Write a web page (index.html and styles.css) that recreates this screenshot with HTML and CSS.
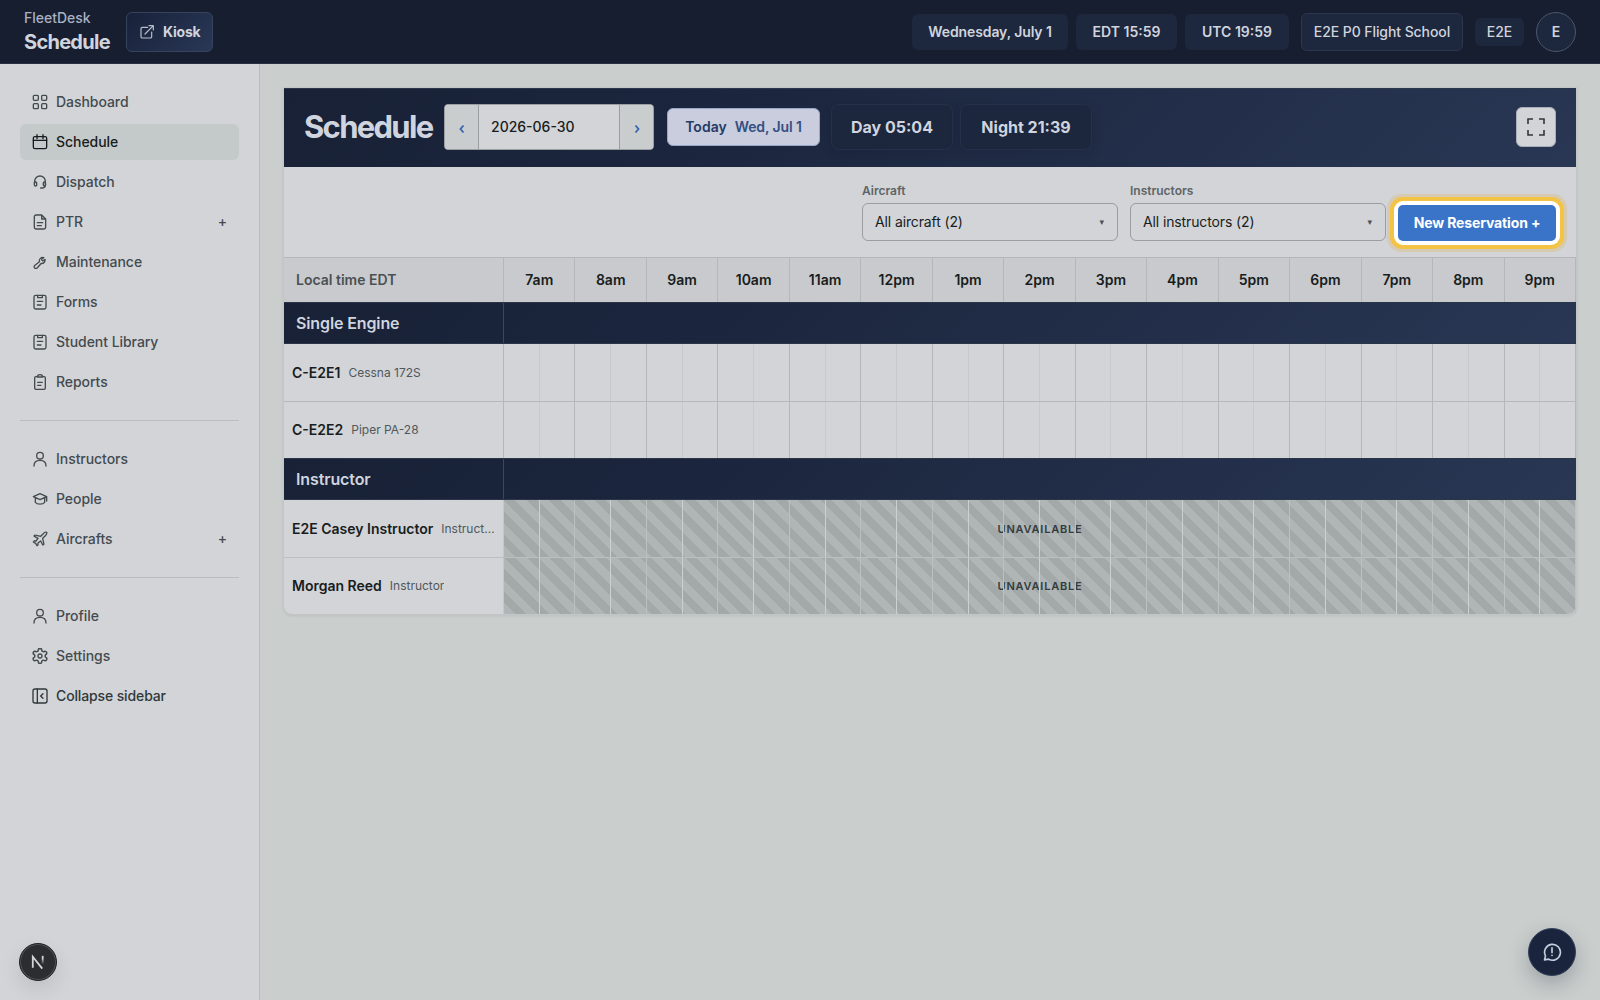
FILE: index.html
```html
<!DOCTYPE html>
<html lang="en">
<head>
<meta charset="utf-8">
<title>FleetDesk – Schedule</title>
<link rel="stylesheet" href="styles.css">
</head>
<body>
<header class="topbar">
  <div class="brand"><span class="brand-name">FleetDesk</span><span class="brand-page">Schedule</span></div>
  <a class="kiosk"><svg class="icon" viewBox="0 0 24 24"><path d="M13 5H5a2 2 0 0 0-2 2v12a2 2 0 0 0 2 2h12a2 2 0 0 0 2-2v-7M9 15 21.500 2.500M15 2.500h6.500V9"/></svg>Kiosk</a>
  <div class="status">
    <span class="chip chip-date">Wednesday, July 1</span>
    <span class="chip chip-local">EDT 15:59</span>
    <span class="chip chip-utc">UTC 19:59</span>
    <span class="chip chip-school">E2E P0 Flight School</span>
    <span class="chip chip-user">E2E</span>
    <span class="avatar">E</span>
  </div>
</header>
<div class="body">
  <aside class="sidebar">
    <nav class="group">
      <a class="item"><svg class="icon" viewBox="0 0 24 24"><rect x="2" y="2" width="7.500" height="7.500" rx="1.500"/><rect x="14.500" y="2" width="7.500" height="7.500" rx="1.500"/><rect x="2" y="14.500" width="7.500" height="7.500" rx="1.500"/><rect x="14.500" y="14.500" width="7.500" height="7.500" rx="1.500"/></svg>Dashboard</a>
      <a class="item active"><svg class="icon" viewBox="0 0 24 24"><rect x="2" y="4" width="20" height="18" rx="2.500"/><path d="M2 9.500h20M7.500 1v6M16.500 1v6"/></svg>Schedule</a>
      <a class="item"><svg class="icon" viewBox="0 0 24 24"><path d="M4 14v-3a8 8 0 0 1 16 0v5c0 3-2 5-5 5h-2"/><path d="M4 12h1.500a1.500 1.500 0 0 1 1.500 1.500v3A1.500 1.500 0 0 1 5.500 18 2 2 0 0 1 3.500 16v-3.500zM20 12h-1.500a1.500 1.500 0 0 0-1.500 1.500v3a1.500 1.500 0 0 0 1.500 1.500 2 2 0 0 0 2-2z"/></svg>Dispatch</a>
      <a class="item"><svg class="icon" viewBox="0 0 24 24"><path d="M14.500 1.500H6a2.500 2.500 0 0 0-2.500 2.500v16A2.500 2.500 0 0 0 6 22.500h12a2.500 2.500 0 0 0 2.500-2.500V7.500zM14.500 1.500v6h6M8 13h8M8 17.500h6"/></svg>PTR<span class="plus">+</span></a>
      <a class="item"><svg class="icon" viewBox="0 0 24 24"><path d="M19.500 8.200 16.800 10a1.200 1.200 0 0 1-1.600-.4l-.5-.8a1.200 1.200 0 0 1 .4-1.600l2.600-1.700a5 5 0 0 0-6.500 6.200L4 17.200a2.600 2.600 0 0 0 3.700 3.700l6-6.700a5 5 0 0 0 5.800-6z"/></svg>Maintenance</a>
      <a class="item"><svg class="icon" viewBox="0 0 24 24"><rect x="3" y="2" width="18" height="20.500" rx="2.500"/><path d="M8.500 2v3.500h7V2M8 11h8M8 16.500h5.500"/></svg>Forms</a>
      <a class="item"><svg class="icon" viewBox="0 0 24 24"><rect x="3" y="2" width="18" height="20.500" rx="2.500"/><path d="M8.500 2v3.500h7V2M8 11h8M8 16.500h5.500"/></svg>Student Library</a>
      <a class="item"><svg class="icon" viewBox="0 0 24 24"><path d="M8 4H6a2 2 0 0 0-2 2v15a2 2 0 0 0 2 2h12a2 2 0 0 0 2-2V6a2 2 0 0 0-2-2h-2M8 4.500a4 3.500 0 0 1 8 0zM8.500 12.500h7M8.500 17h5"/></svg>Reports</a>
    </nav>
    <nav class="group">
      <a class="item"><svg class="icon" viewBox="0 0 24 24"><circle cx="12" cy="7" r="5"/><path d="M3 22.500c0-5.500 4-8.500 9-8.500s9 3 9 8.500"/></svg>Instructors</a>
      <a class="item"><svg class="icon" viewBox="0 0 24 24"><path d="M2 8.500 12 4l10 4.500L12 13zM5 10.500V17c3 3.500 11 3.500 14 0v-6.500M22 8.500V15"/></svg>People</a>
      <a class="item"><svg class="icon" viewBox="0 0 24 24"><path d="M17.800 19.200 16 11l4-4c1.800-1.800 2.500-4 2-5-1-.5-3.500 0-5 2l-4 4-8-1.800c-.7-.2-1.300.1-1.600.6-.3.500-.2 1 .3 1.300L9 11l-3 4H3l-1 1.500 3.500 2L7.500 22 9 21v-3l4-3 2.800 5.300c.3.500.8.600 1.300.4.500-.3.800-.9.700-1.500z"/></svg>Aircrafts<span class="plus">+</span></a>
    </nav>
    <nav class="group">
      <a class="item"><svg class="icon" viewBox="0 0 24 24"><circle cx="12" cy="7" r="5"/><path d="M3 22.500c0-5.500 4-8.500 9-8.500s9 3 9 8.500"/></svg>Profile</a>
      <a class="item"><svg class="icon" viewBox="0 0 24 24"><path d="M9.700 4.100a2.300 2.300 0 0 1 4.600 0 2.300 2.300 0 0 0 3.300 1.900 2.300 2.300 0 0 1 2.300 4 2.300 2.300 0 0 0 0 3.900 2.300 2.300 0 0 1-2.300 4 2.300 2.300 0 0 0-3.300 1.900 2.300 2.300 0 0 1-4.600 0 2.300 2.300 0 0 0-3.300-1.900 2.300 2.300 0 0 1-2.300-4 2.300 2.300 0 0 0 0-3.900 2.300 2.300 0 0 1 2.300-4 2.300 2.300 0 0 0 3.300-1.900" transform="matrix(1.12 0 0 1.12 -1.440 -1.440)"/><circle cx="12" cy="12" r="3"/></svg>Settings</a>
      <a class="item strong"><svg class="icon" viewBox="0 0 24 24"><rect x="1.500" y="1.500" width="21" height="21" rx="3"/><path d="M8 1.500v21M16.500 8.500 13 12l3.500 3.500"/></svg>Collapse sidebar</a>
    </nav>
  </aside>
  <main class="main">
    <section class="card">
      <div class="card-head">
        <h1>Schedule</h1>
        <div class="datebox">
          <span class="step"><svg viewBox="0 0 8 10"><path d="M5.500 1.500 2.500 5l3 3.500"/></svg></span><span class="date">2026-06-30</span><span class="step"><svg viewBox="0 0 8 10"><path d="M2.500 1.500 5.500 5l-3 3.500"/></svg></span>
        </div>
        <span class="today"><b>Today</b> <span>Wed, Jul 1</span></span>
        <span class="clock">Day 05:04</span>
        <span class="clock clock-night">Night 21:39</span>
        <span class="expand"><svg viewBox="0 0 18 18"><path d="M1 6V1h5M12 1h5v5M17 12v5h-5M6 17H1v-5"/></svg></span>
      </div>
      <div class="toolbar">
        <div class="field"><label>Aircraft</label><span class="select">All aircraft (2)<i>▾</i></span></div>
        <div class="field"><label>Instructors</label><span class="select">All instructors (2)<i>▾</i></span></div>
        <span class="new">New Reservation +</span>
      </div>
      <div class="row hours"><div class="label">Local time EDT</div><div class="track"><span>7am</span><span>8am</span><span>9am</span><span>10am</span><span>11am</span><span>12pm</span><span>1pm</span><span>2pm</span><span>3pm</span><span>4pm</span><span>5pm</span><span>6pm</span><span>7pm</span><span>8pm</span><span>9pm</span></div></div>
      <div class="row band"><div class="label">Single Engine</div></div>
      <div class="row slot"><div class="label"><b>C-E2E1</b><small>Cessna 172S</small></div><div class="track"><i></i><i></i><i></i><i></i><i></i><i></i><i></i><i></i><i></i><i></i><i></i><i></i><i></i><i></i><i></i></div></div>
      <div class="row slot last"><div class="label"><b>C-E2E2</b><small>Piper PA-28</small></div><div class="track"><i></i><i></i><i></i><i></i><i></i><i></i><i></i><i></i><i></i><i></i><i></i><i></i><i></i><i></i><i></i></div></div>
      <div class="row band"><div class="label">Instructor</div></div>
      <div class="row slot off"><div class="label"><b>E2E Casey Instructor</b><small>Instructor</small></div><div class="track"><em class="unavailable">UNAVAILABLE</em><i></i><i></i><i></i><i></i><i></i><i></i><i></i><i></i><i></i><i></i><i></i><i></i><i></i><i></i><i></i></div></div>
      <div class="row slot off last"><div class="label"><b>Morgan Reed</b><small>Instructor</small></div><div class="track"><em class="unavailable">UNAVAILABLE</em><i></i><i></i><i></i><i></i><i></i><i></i><i></i><i></i><i></i><i></i><i></i><i></i><i></i><i></i><i></i></div></div>
    </section>
  </main>
</div>
<div class="dev-badge"><svg viewBox="0 0 38 38"><defs><linearGradient id="fade" x1="0" y1="0" x2="0" y2="1"><stop offset="0.3" stop-color="#d3d4d8"/><stop offset="1" stop-color="#d3d4d8" stop-opacity="0"/></linearGradient></defs><path d="M13.500 25V13.500L23.500 26" fill="none" stroke="#d3d4d8" stroke-width="1.900"/><rect x="23" y="12.500" width="1.900" height="9" fill="url(#fade)"/></svg></div>
<div class="feedback"><svg class="icon" viewBox="0 0 24 24"><path d="M3 21.500 4.200 16.700A9.500 9.500 0 1 1 8 20.600zM12 7v5.500M12 16v.2"/></svg></div>
</body>
</html>
```
FILE: styles.css
```css
* { box-sizing: border-box; }
body {
  margin: 0;
  height: 1000px;
  overflow: hidden;
  display: flex;
  flex-direction: column;
  background: #cacecd;
  color: #181d20;
  font-family: Inter, "Liberation Sans", sans-serif;
  font-size: 14px;
  line-height: 20px;
}
.icon {
  width: 16px;
  height: 16px;
  fill: none;
  stroke: currentColor;
  stroke-width: 2;
  stroke-linecap: round;
  stroke-linejoin: round;
  flex: none;
}

/* top bar */
.topbar {
  height: 64px;
  flex: none;
  display: flex;
  align-items: center;
  padding: 0 24px;
  background: #161e30;
  border-bottom: 1px solid #273145;
  color: #d0d4dd;
}
.brand { display: flex; flex-direction: column; width: 86px; margin-right: 16px; }
.brand-name { font-size: 14px; line-height: 20px; font-weight: 500; color: #a9b1c3; }
.brand-page { font-size: 20px; line-height: 28px; font-weight: 700; letter-spacing: -0.72px; }
.kiosk {
  height: 40px;
  width: 87px;
  display: flex;
  align-items: center;
  gap: 8px;
  padding: 0 12px;
  font-weight: 700;
  letter-spacing: -0.2px;
  border: 1px solid #36435c;
  border-radius: 6px;
  background: linear-gradient(135deg, #18213a, #293856);
}
.kiosk .icon { color: #b7bdca; stroke-width: 1.8; }
.status { margin-left: auto; display: flex; align-items: center; }
.chip {
  height: 36px;
  display: flex;
  align-items: center;
  justify-content: center;
  margin-left: 8px;
  font-weight: 600;
  border-radius: 6px;
  background: #1d273d;
  white-space: nowrap;
}
.chip-date { width: 156px; letter-spacing: -0.1px; }
.chip-local { width: 101px; }
.chip-utc { width: 104px; }
.chip-school { width: 162px; height: 38px; margin-left: 12px; border: 1px solid #2c374e; font-weight: 500; letter-spacing: -0.08px; }
.chip-user { width: 49px; height: 28px; margin-left: 12px; font-weight: 500; }
.avatar {
  width: 40px;
  height: 40px;
  margin-left: 12px;
  display: grid;
  place-items: center;
  border: 1px solid #4b566b;
  border-radius: 50%;
  background: #1d273d;
  font-weight: 600;
}

/* sidebar */
.body { flex: 1; display: flex; min-height: 0; }
.sidebar {
  width: 260px;
  flex: none;
  padding: 20px;
  border-right: 1px solid #b7bcbd;
  background: #d3d4d8;
}
.group { display: flex; flex-direction: column; gap: 4px; }
.group + .group { margin-top: 20px; padding-top: 20px; border-top: 1px solid #b9bdbf; }
.item {
  height: 36px;
  display: flex;
  align-items: center;
  gap: 8px;
  padding: 0 12px;
  border-radius: 6px;
  font-weight: 500;
  letter-spacing: -0.05px;
  color: #434b4e;
}
.item.active { background: #c4caca; color: #181d20; }
.item.strong { color: #30383a; letter-spacing: -0.13px; }
.plus { margin-left: auto; }

/* schedule card */
.main { flex: 1; padding: 24px; min-width: 0; }
.card {
  border-radius: 0 0 8px 8px;
  background: #d3d4d8;
  box-shadow: 0 0 0 1px #c2c6c7, 0 1px 3px 1px rgba(0, 0, 0, .08);
}
.card-head {
  height: 79px;
  display: flex;
  align-items: center;
  padding: 0 20px 2px;
  color: #d0d4df;
  border-top: 1px solid #2d374b;
  background: linear-gradient(135deg, #182135, #1b253d 32%, #293754);
}
h1 { margin: 0 12px 0 0; width: 128px; font-size: 31px; line-height: 40px; font-weight: 700; letter-spacing: -1.7px; }
.datebox {
  width: 210px;
  height: 46px;
  display: flex;
  border: 1px solid #999ea1;
  border-radius: 4px;
  overflow: hidden;
  background: #d3d4d8;
  color: #181d20;
}
.step { width: 33px; flex: none; display: grid; place-items: center; background: #c9cdce; }
.step svg { width: 8px; height: 10px; margin-top: 3px; fill: none; stroke: #3c67b0; stroke-width: 1.9; }
.date { flex: 1; display: flex; align-items: center; padding: 0 12px 1px; font-weight: 500; border: solid #999ea1; border-width: 0 1px; }
.today {
  height: 38px;
  width: 153px;
  margin: 0 11px 0 13px;
  display: flex;
  align-items: center;
  justify-content: center;
  gap: 8px;
  border: 1px solid #97a7c8;
  border-radius: 6px;
  background: #c9cddd;
  color: #354f82;
  font-weight: 600;
}
.today b { color: #243b66; font-weight: 600; }
.today span { letter-spacing: -0.1px; }
.clock {
  height: 46px;
  width: 122px;
  display: grid;
  place-items: center;
  border: 1px solid #263149;
  border-radius: 8px;
  background: #1c263c;
  box-shadow: 0 4px 12px rgba(10, 16, 30, .12);
  font-size: 16px;
  font-weight: 700;
}
.clock-night { width: 132px; margin-left: 7px; }
.expand {
  width: 40px;
  height: 40px;
  margin-left: auto;
  display: grid;
  place-items: center;
  border: 1px solid #a9afb8;
  border-radius: 6px;
  background: #d3d4d8;
}
.expand svg { width: 18px; height: 18px; fill: none; stroke: #30363b; stroke-width: 1.6; }
.toolbar {
  height: 90px;
  display: flex;
  align-items: flex-start;
  justify-content: flex-end;
  gap: 12px;
  padding: 15px 20px 0;
}
.field { display: flex; flex-direction: column; gap: 4px; }
label { font-size: 12px; line-height: 17px; font-weight: 600; color: #5d6467; }
.select {
  width: 256px;
  height: 38px;
  display: flex;
  align-items: center;
  justify-content: space-between;
  padding: 0 13px 0 12px;
  border: 1px solid #999ea1;
  border-radius: 6px;
  letter-spacing: -0.12px;
}
.select i { font: 9px "DejaVu Sans", sans-serif; color: #4b5255; }
.new {
  height: 36px;
  width: 158px;
  margin-top: 23px;
  display: grid;
  place-items: center;
  border-radius: 5px;
  background: #3a74c8;
  color: #fff;
  font-weight: 700;
  letter-spacing: -0.14px;
  box-shadow: 0 0 0 4px #fff, 0 0 0 8px #f3c345, 0 0 0 11px rgba(221, 179, 100, .32);
}

/* timetable */
.row { display: flex; }
.label { width: 220px; flex: none; display: flex; align-items: center; border-right: 1px solid #b4b8bb; white-space: nowrap; }
.track { flex: 1; display: grid; grid-template-columns: repeat(15, 1fr); }
.hours { height: 45px; background: #c9cacd; border-top: 1px solid #b4b8bb; font-weight: 600; }
.hours .label { padding-left: 12px; color: #4a5154; }
.track > span { display: grid; place-items: center; border-right: 1px solid #b4b8bb; }
.band {
  height: 42px;
  border: solid #2b3548;
  border-width: 1px 0;
  color: #d0d4df;
  background: linear-gradient(135deg, #182135, #1b253d 32%, #293754);
}
.band .label { padding-left: 12px; border-color: #3a4560; font-size: 16px; font-weight: 600; letter-spacing: -0.12px; }
.slot { height: 57px; }
.slot .label { gap: 8px; padding: 0 8px; }
.slot b { font-weight: 600; }
.slot small { font-size: 12px; color: #50585b; overflow: hidden; text-overflow: ellipsis; }
.slot i {
  border-right: 1px solid #b4b8bb;
  background: linear-gradient(#c7cacd, #c7cacd) 50% 0 / 1px 100% no-repeat;
}
.slot.last { border-top: 1px solid #b4b8bb; }
.off .label { border-right-color: #c4c8c9; }
.off .track { position: relative; background: repeating-linear-gradient(45deg, #b0b5b5 0 8px, #a3a9a8 8px 16px); }
.off i { position: relative; border-right-color: #bbc0c0; background-image: linear-gradient(#cdd0d1, #cdd0d1); }
.off.last { border-top-color: #bbbfc0; }
.off.last, .off.last .track { border-radius: 0 0 8px 8px; }
.off.last .track { border-bottom-left-radius: 0; }
/* label spans the whole track, beneath the hour lines */
.unavailable {
  position: absolute;
  inset: 0;
  display: grid;
  place-items: center;
  font-style: normal;
  font-size: 11px;
  font-weight: 600;
  letter-spacing: .8px;
  color: #343c3e;
}

/* floating buttons */
.dev-badge {
  position: absolute;
  left: 19px;
  top: 943px;
  width: 38px;
  height: 38px;
  border-radius: 50%;
  border: 1px solid #222426;
  background: #2b2d30;
  box-shadow: inset 0 0 0 1px #505357, 0 8px 20px rgba(0, 0, 0, .1);
}
.dev-badge svg { display: block; width: 36px; height: 36px; }
.feedback {
  position: absolute;
  left: 1528px;
  top: 928px;
  width: 48px;
  height: 48px;
  display: grid;
  place-items: center;
  border: 1px solid #33415c;
  border-radius: 50%;
  background: #1a243c;
  color: #c5cddd;
  box-shadow: 0 8px 20px rgba(20, 26, 45, .25);
}
.feedback .icon { width: 20px; height: 20px; }
```
